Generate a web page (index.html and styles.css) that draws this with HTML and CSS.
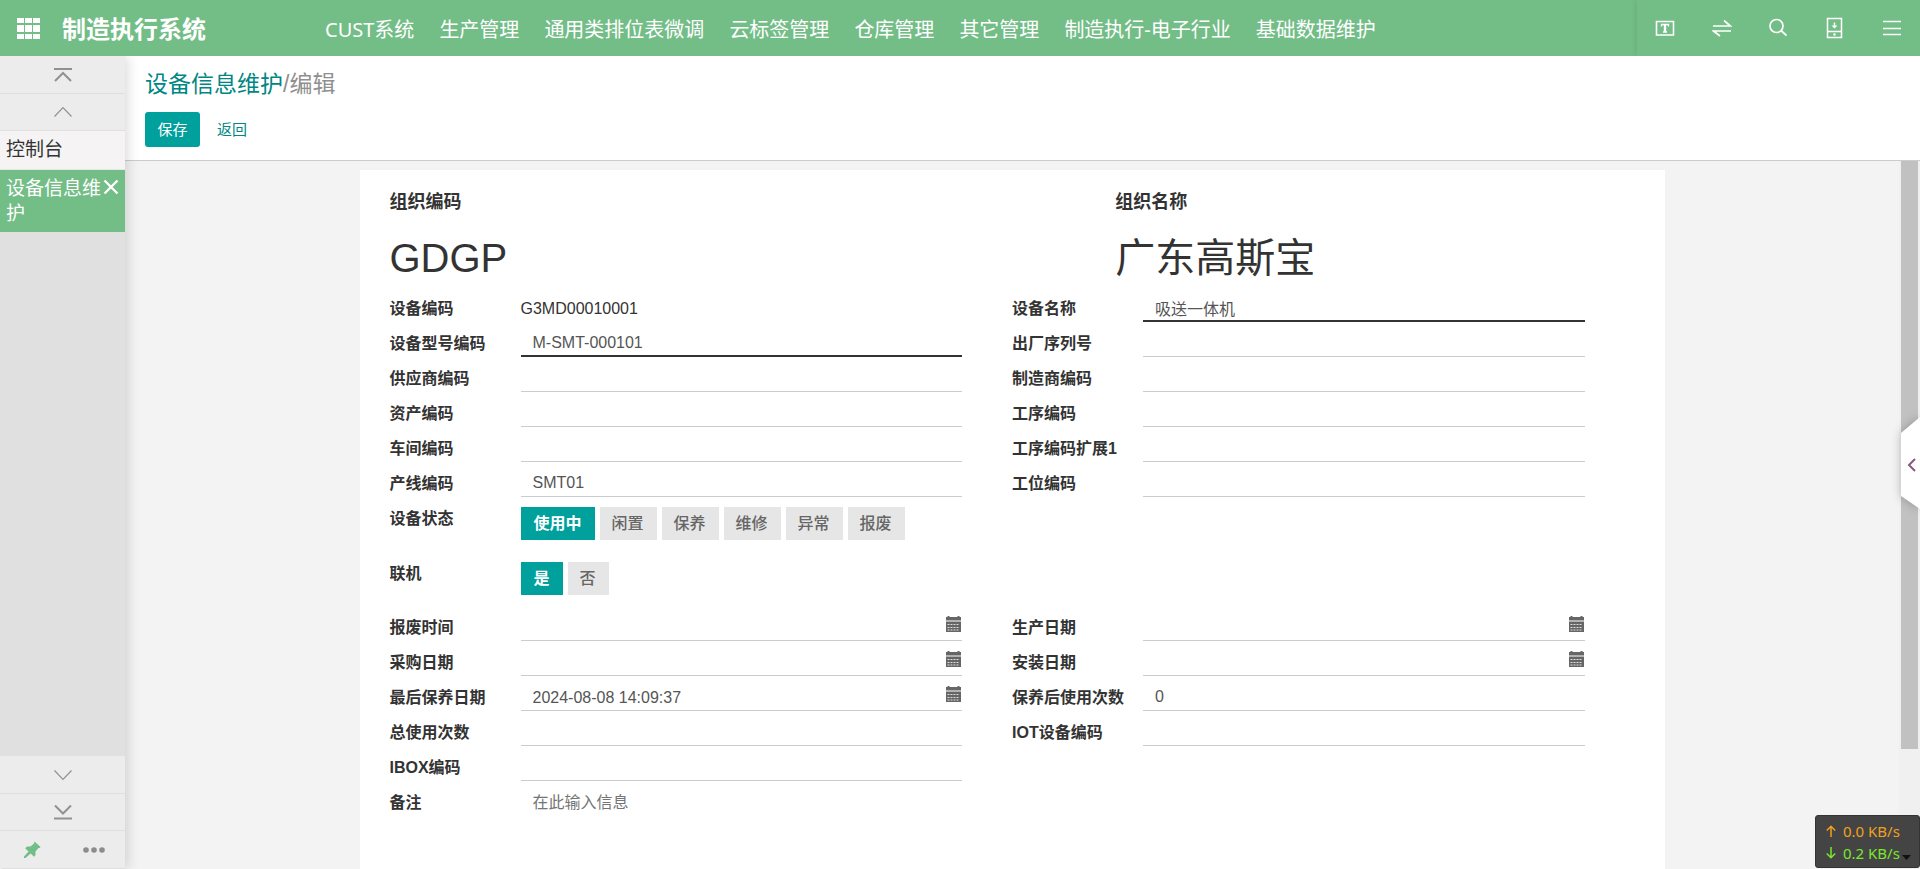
FILE: index.html
```
<!DOCTYPE html>
<html lang="zh-CN">
<head>
<meta charset="utf-8">
<title>设备信息维护 - 制造执行系统</title>
<link rel="stylesheet" href="styles.css">
</head>
<body>
<header class="topbar">
  <button class="apps" aria-label="应用">
    <svg width="23" height="21" viewBox="0 0 23 21" fill="#fff"><path d="M0 0h7v5H0zM8 0h7v5H8zM16 0h7v5h-7zM0 7h7v7H0zM8 7h7v7H8zM16 7h7v7h-7zM0 16h7v5H0zM8 16h7v5H8zM16 16h7v5h-7z"/></svg>
  </button>
  <div class="brand">制造执行系统</div>
  <nav class="menu">
    <a href="#">CUST系统</a><a href="#">生产管理</a><a href="#">通用类排位表微调</a><a href="#">云标签管理</a><a href="#">仓库管理</a><a href="#">其它管理</a><a href="#">制造执行-电子行业</a><a href="#">基础数据维护</a>
  </nav>
  <div class="tools">
    <button aria-label="文字"><svg width="20" height="22" viewBox="0 0 20 22" fill="none" stroke="#fff"><path d="M1.5 4.500h17v13.500h-17z" stroke-width="1.600"/><path d="M6.500 9.500v-2h7v2M8 15h4" stroke-width="1.400"/><path d="M10 7.500v7.500" stroke-width="2.400"/></svg></button>
    <button aria-label="切换"><svg width="20" height="22" viewBox="0 0 20 22" fill="none" stroke="#fff" stroke-width="1.700"><path d="M1 9h17.500l-6.500-5.500M19 14H1.500l6.500 5"/></svg></button>
    <button aria-label="搜索"><svg width="20" height="22" viewBox="0 0 20 22" fill="none" stroke="#fff" stroke-width="1.700"><circle cx="8.500" cy="9" r="6.500"/><path d="M13 13.500l5.500 5"/></svg></button>
    <button aria-label="下载"><svg width="20" height="22" viewBox="0 0 20 22" fill="none" stroke="#fff" stroke-width="1.500"><path d="M2.500 1.500h14v19h-14zM2.500 14.500h14"/><path d="M9.500 5.500v5"/><path d="M6.500 8.500h6l-3 3z" fill="#fff" stroke="none"/><circle cx="9.500" cy="17.500" r="1.200" fill="#fff" stroke="none"/></svg></button>
    <button aria-label="菜单"><svg width="20" height="22" viewBox="0 0 20 22" fill="none" stroke="#fff" stroke-width="1.500"><path d="M1 4.500h18M1 11.500h18M1 17.500h18"/></svg></button>
  </div>
</header>
<div class="body">
  <aside class="side">
    <button class="step" aria-label="顶部"><svg width="18" height="16" viewBox="0 0 18 16" fill="none" stroke="#919191" stroke-width="2"><path d="M0 2h18M1 14l8-8 8 8"/></svg></button>
    <button class="step short" aria-label="向上"><svg width="18" height="12" viewBox="0 0 18 12" fill="none" stroke="#919191" stroke-width="1.200"><path d="M.5 10.500l8.500-9 8.500 9"/></svg></button>
    <a class="tab" href="#">控制台</a>
    <a class="tab active" href="#"><span>设备信息维护</span><svg width="16" height="16" viewBox="0 0 16 16" stroke="#fff" stroke-width="2.400"><path d="M1.500 1.500l13 13M14.500 1.500l-13 13"/></svg></a>
    <div class="spacer"></div>
    <button class="step" aria-label="向下"><svg width="18" height="12" viewBox="0 0 18 12" fill="none" stroke="#919191" stroke-width="1.200"><path d="M.5 1.500l8.500 9 8.500-9"/></svg></button>
    <button class="step short" aria-label="底部"><svg width="18" height="16" viewBox="0 0 18 16" fill="none" stroke="#919191" stroke-width="2"><path d="M0 14.500h18M1 1.500l8 8 8-8"/></svg></button>
    <div class="pair">
      <button class="step" aria-label="固定"><svg width="17" height="17" viewBox="0 0 17 17" fill="#73bd87"><path d="M10.500 0.500l6 5.500-1 1-1 0-3 3.500 0 3.500-1.500 1.800-3.300-3.300L1.500 17H0v-1.500l4.500-5-3.300-3.300L3 5.500h3.500L10 2.500z"/></svg></button>
      <button class="step" aria-label="更多"><svg width="22" height="6" viewBox="0 0 22 6" fill="#8c8c8c"><circle cx="3" cy="3" r="2.800"/><circle cx="11" cy="3" r="2.800"/><circle cx="19" cy="3" r="2.800"/></svg></button>
    </div>
  </aside>
  <main class="main">
    <div class="control">
      <div class="crumbs"><a href="#">设备信息维护</a><span>/编辑</span></div>
      <div class="actions"><button class="save">保存</button><button class="back">返回</button></div>
    </div>
    <div class="content">
      <div class="scroll">
        <form class="sheet">
          <div class="titles">
            <div><b>组织编码</b><h1>GDGP</h1></div>
            <div><b>组织名称</b><h1>广东高斯宝</h1></div>
          </div>
          <div class="group">
            <div class="col">
              <div class="row"><span class="label">设备编码</span><span class="value">G3MD00010001</span></div>
              <div class="row"><label for="a2">设备型号编码</label><input id="a2" class="need" value="M-SMT-000101"></div>
              <div class="row"><label for="a3">供应商编码</label><input id="a3"></div>
              <div class="row"><label for="a4">资产编码</label><input id="a4"></div>
              <div class="row"><label for="a5">车间编码</label><input id="a5"></div>
              <div class="row"><label for="a6">产线编码</label><input id="a6" value="SMT01"></div>
              <div class="row"><span class="label">设备状态</span><div class="chips"><button type="button" class="on">使用中</button><button type="button">闲置</button><button type="button">保养</button><button type="button">维修</button><button type="button">异常</button><button type="button">报废</button></div></div>
              <div class="row"><span class="label">联机</span><div class="chips"><button type="button" class="on">是</button><button type="button">否</button></div></div>
            </div>
            <div class="col">
              <div class="row"><label for="b1">设备名称</label><input id="b1" class="need" value="吸送一体机"></div>
              <div class="row"><label for="b2">出厂序列号</label><input id="b2"></div>
              <div class="row"><label for="b3">制造商编码</label><input id="b3"></div>
              <div class="row"><label for="b4">工序编码</label><input id="b4"></div>
              <div class="row"><label for="b5">工序编码扩展1</label><input id="b5"></div>
              <div class="row"><label for="b6">工位编码</label><input id="b6"></div>
            </div>
          </div>
          <div class="group">
            <div class="col">
              <div class="row"><label for="c1">报废时间</label><div class="date"><input id="c1"><svg><use href="#cal"/></svg></div></div>
              <div class="row"><label for="c2">采购日期</label><div class="date"><input id="c2"><svg><use href="#cal"/></svg></div></div>
              <div class="row"><label for="c3">最后保养日期</label><div class="date"><input id="c3" value="2024-08-08 14:09:37"><svg><use href="#cal"/></svg></div></div>
              <div class="row"><label for="c4">总使用次数</label><input id="c4"></div>
              <div class="row"><label for="c5">IBOX编码</label><input id="c5"></div>
              <div class="row"><label for="c6">备注</label><textarea id="c6" rows="1" placeholder="在此输入信息"></textarea></div>
            </div>
            <div class="col">
              <div class="row"><label for="d1">生产日期</label><div class="date"><input id="d1"><svg><use href="#cal"/></svg></div></div>
              <div class="row"><label for="d2">安装日期</label><div class="date"><input id="d2"><svg><use href="#cal"/></svg></div></div>
              <div class="row"><label for="d3">保养后使用次数</label><input id="d3" value="0"></div>
              <div class="row"><label for="d4">IOT设备编码</label><input id="d4"></div>
            </div>
          </div>
        </form>
      </div>
      <div class="track"><div class="thumb"></div></div>
    </div>
  </main>
</div>
<button class="drawer" aria-label="展开"><svg width="19" height="92" viewBox="0 0 19 92"><path d="M19 0L0 16v63l19 13z" fill="#fff"/><path d="M14 42l-6 6 6 6" fill="none" stroke="#875a7b" stroke-width="2"/></svg></button>
<div class="net">
  <div class="up"><svg width="10" height="12" viewBox="0 0 10 12" fill="none" stroke="currentColor" stroke-width="1.500"><path d="M5 12V1.500M.8 5.500L5 1.200l4.200 4.300"/></svg>0.0 KB/s</div>
  <div class="down"><svg width="10" height="12" viewBox="0 0 10 12" fill="none" stroke="currentColor" stroke-width="1.500"><path d="M5 0v10.500M.8 6.500L5 10.800l4.200-4.300"/></svg>0.2 KB/s<svg class="caret" width="9" height="5" viewBox="0 0 9 5"><path d="M0 0h9L4.500 5z" fill="#111"/></svg></div>
</div>
<svg class="defs" width="0" height="0"><symbol id="cal" viewBox="0 0 15 16"><path d="M0 1h1.500V0h2v1h8V0h2v1H15v3.500H0z" fill="#666"/><path d="M0 5.500h15V16H0z" fill="#666"/><path d="M1.500 8.500h12M1.500 11.500h12M1.500 14h12" stroke="#ddd" stroke-dasharray="2 1"/></symbol></svg>
</body>
</html>
```
FILE: styles.css
```
* { box-sizing: border-box; }
body {
  margin: 0;
  height: 100vh;
  display: flex;
  flex-direction: column;
  overflow: hidden;
  font: 16px/27px "Liberation Sans", "Noto Sans CJK SC", sans-serif;
  color: #333;
  background: #f3f3f3;
}
button, input, textarea { font: inherit; color: inherit; border: 0; background: none; margin: 0; padding: 0; }
a { color: inherit; text-decoration: none; }
svg { display: block; flex: none; }
.defs { position: absolute; }

.topbar { display: flex; align-items: center; height: 56px; flex: none; background: #73bd87; color: #fff; }
.apps { padding: 0 22px 0 17px; }
.brand { font-size: 24px; font-weight: 700; width: 263px; padding-top: 3px; white-space: nowrap; }
.menu { display: flex; gap: 25px; flex: 1; padding-top: 2px; font-family: "Noto Sans", "Noto Sans CJK SC", sans-serif; font-size: 20px; white-space: nowrap; }
.tools { display: flex; align-self: stretch; width: 283px; box-shadow: 0 0 6px rgba(0, 0, 0, .1); }
.tools button { flex: 1; display: flex; align-items: center; justify-content: center; }

.body { display: flex; flex: 1; min-height: 0; }
.side { width: 125px; flex: none; display: flex; flex-direction: column; background: #e0e0e0; box-shadow: 2px 0 12px rgba(0, 0, 0, .16); z-index: 1; clip-path: inset(0 -16px 0 0); }
.step { height: 38px; display: flex; align-items: center; justify-content: center; background: #ececec; border-bottom: 1px solid #dfdfdf; }
.short { height: 37px; }
.tab { display: flex; padding: 6px 6px 7px; font-size: 19px; line-height: 25px; background: #f5f3f4; border-bottom: 1px solid #e6e6e6; }
.tab.active { background: #73bd87; color: #fff; padding-bottom: 6px; border: 0; }
.tab.active span { width: 97px; }
.tab svg { margin-top: 3px; }
.spacer { flex: 1; }
.pair { display: flex; background: #ececec; padding-left: 2px; }
.pair .step { flex: 1; }

.main { flex: 1; min-width: 0; display: flex; flex-direction: column; }
.control { background: #fff; border-bottom: 1px solid #ccc; padding: 12px 20px 13px; }
.crumbs { font-size: 23px; line-height: 32px; color: #8f8f8f; }
.crumbs a { color: #008784; }
.actions { display: flex; margin-top: 12px; font-size: 15px; line-height: 35px; }
.save { background: #00a09d; color: #fff; padding: 0 12px; border-radius: 3px; min-width: 55px; }
.back { color: #008784; padding: 0 17px; }
.content { flex: 1; min-height: 0; display: flex; }
.scroll { flex: 1; min-width: 0; overflow: hidden; display: flex; justify-content: center; padding-top: 9px; }
.sheet { width: 100%; max-width: 1305px; background: #fff; padding: 18px 80px 0 30px; }
.track { width: 21px; background: #f0f0f0; padding: 0 2px; }
.thumb { height: 83%; background: #c1c1c1; }

.titles { display: grid; grid-template-columns: 3fr 2fr; column-gap: 22px; height: 99px; }
.titles b { display: block; font-size: 18px; line-height: 28px; }
.titles h1 { margin: 16px 0 0; font-size: 40px; line-height: 52px; font-weight: 400; }
.group { display: grid; grid-template-columns: 1fr 1fr; column-gap: 50px; }
.row { display: grid; grid-template-columns: 131px 1fr; align-items: start; padding-top: 8px; white-space: nowrap; }
label, .label { font-weight: 700; }
.row input, .row textarea { display: block; width: 100%; height: 27px; line-height: 25px; padding: 0 12px; border-bottom: 1px solid #ccc; color: #555; outline: 0; }
.row .need { border-bottom: 2px solid #333; }
.row textarea { border: 0; resize: none; overflow: hidden; line-height: 27px; }
.row textarea::placeholder { color: #757575; }
.date { display: flex; border-bottom: 1px solid #ccc; height: 27px; padding-right: 1px; }
.row .date input { border: 0; flex: 1; min-width: 0; }
.date svg { width: 15px; height: 16px; margin-top: 2px; }
.chips { display: flex; gap: 5px; padding: 2px 0 12px; }
.row:last-child .chips { padding-bottom: 11px; }
.chips button { background: #e6e6e6; color: #666; font-weight: 500; padding: 0 13px 0 12px; line-height: 33px; }
.chips .on { background: #00a09d; color: #fff; font-weight: 700; padding-left: 13px; }

.drawer { position: absolute; right: 0; top: 417px; z-index: 2; filter: drop-shadow(0 0 5px rgba(0, 0, 0, .25)); }
.net { position: absolute; right: 0; bottom: 1px; z-index: 3; width: 105px; padding: 4px 0 3px 10px; background: #444; border: 1px solid #333; border-radius: 3px; font: 15px/22px "Noto Sans", sans-serif; white-space: nowrap; }
.net div { display: flex; align-items: center; gap: 7px; }
.up { color: #f0a020; }
.down { color: #7be82c; }
.net .caret { margin: 8px 0 0 -5px; }
```
